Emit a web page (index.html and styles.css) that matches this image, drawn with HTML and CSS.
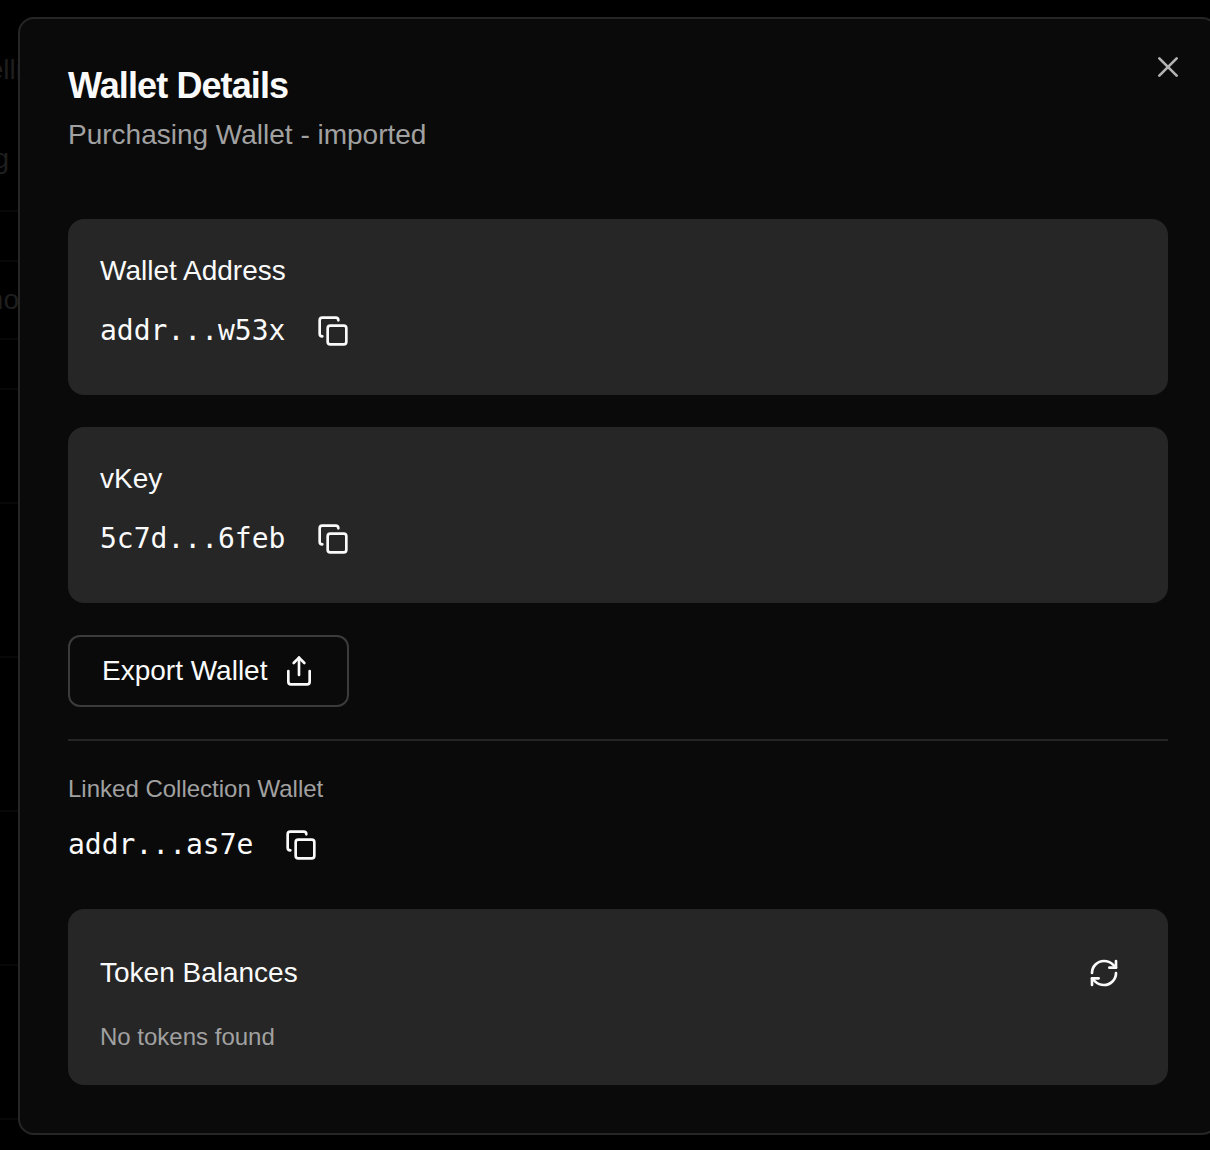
FILE: index.html
```html
<!DOCTYPE html>
<html lang="en">
<head>
<meta charset="utf-8">
<title>Wallet Details</title>
<link rel="stylesheet" href="styles.css">
</head>
<body>
<svg class="sprite" aria-hidden="true">
  <symbol id="copy" viewBox="0 0 24 24"><rect width="14" height="14" x="8" y="8" rx="2" ry="2"/><path d="M4 16c-1.100 0-2-.9-2-2V4c0-1.100.9-2 2-2h10c1.100 0 2 .9 2 2"/></symbol>
  <symbol id="share" viewBox="0 0 24 24"><path d="M4 12v8a2 2 0 0 0 2 2h12a2 2 0 0 0 2-2v-8"/><path d="m16 6-4-4-4 4"/><path d="M12 2v13"/></symbol>
  <symbol id="refresh" viewBox="0 0 24 24"><path d="M3 12a9 9 0 0 1 9-9 9.750 9.750 0 0 1 6.740 2.740L21 8"/><path d="M21 3v5h-5"/><path d="M21 12a9 9 0 0 1-9 9 9.750 9.750 0 0 1-6.740-2.740L3 16"/><path d="M8 16H3v5"/></symbol>
  <symbol id="close" viewBox="0 0 24 24"><path d="M18.500 5.500 5.500 18.500"/><path d="m5.500 5.500 13 13"/></symbol>
</svg>
<div class="screen">
  <div class="backdrop">
    <div class="strip strip-head"><span class="sell">elli</span><span class="ing">g</span></div>
    <div class="strip strip-sm"></div>
    <div class="strip strip-md"><span class="who">ho</span></div>
    <div class="strip strip-sm"></div>
    <div class="strip strip-lg"></div>
    <div class="strip strip-xl"></div>
    <div class="strip strip-xl"></div>
    <div class="strip strip-xl"></div>
    <div class="strip strip-xl"></div>
  </div>
  <main class="dialog">
    <header class="header">
      <div class="heading">
        <h1 class="title">Wallet Details</h1>
        <p class="subtitle">Purchasing Wallet - imported</p>
      </div>
      <button class="close" aria-label="Close"><svg class="icon"><use href="#close"/></svg></button>
    </header>
    <section class="card">
      <h2 class="label">Wallet Address</h2>
      <div class="value"><span class="mono">addr...w53x</span><button class="icon-button" aria-label="Copy"><svg class="icon"><use href="#copy"/></svg></button></div>
    </section>
    <section class="card">
      <h2 class="label">vKey</h2>
      <div class="value"><span class="mono">5c7d...6feb</span><button class="icon-button" aria-label="Copy"><svg class="icon"><use href="#copy"/></svg></button></div>
    </section>
    <button class="export"><span>Export Wallet</span><svg class="icon"><use href="#share"/></svg></button>
    <section class="linked">
      <p class="note">Linked Collection Wallet</p>
      <div class="value"><span class="mono">addr...as7e</span><button class="icon-button" aria-label="Copy"><svg class="icon"><use href="#copy"/></svg></button></div>
    </section>
    <section class="card balances">
      <div class="balances-head"><h2 class="label">Token Balances</h2><button class="icon-button" aria-label="Refresh"><svg class="icon"><use href="#refresh"/></svg></button></div>
      <p class="note">No tokens found</p>
    </section>
  </main>
</div>
</body>
</html>
```
FILE: styles.css
```css
* { box-sizing: border-box; margin: 0; padding: 0; }
body {
  background: #000;
  color: #fafafa;
  font: 28px/40px "Liberation Sans", Arial, sans-serif;
  overflow: hidden;
}
button { background: none; border: 0; color: inherit; font: inherit; }
.sprite { display: none; }
.screen { display: flex; height: 1150px; overflow: hidden; }

.backdrop { width: 18px; flex: none; overflow: hidden; color: #1f1f1f; }
.strip {
  display: flex;
  flex-direction: column;
  align-items: flex-end;
  border-bottom: 2px solid #080808;
}
.strip-head { height: 212px; padding-top: 50px; gap: 49px; }
.strip-sm { height: 50px; }
.strip-md { height: 78px; justify-content: center; }
.strip-lg { height: 114px; }
.strip-xl { height: 154px; }
.sell { margin-right: -4px; }
.ing { padding-right: 9px; }
.who { margin-right: -1px; }

.dialog {
  display: flex;
  flex-direction: column;
  align-items: stretch;
  gap: 32px;
  flex: none;
  width: 1200px;
  height: 1118px;
  margin-top: 17px;
  padding: 48px;
  background: #0a0a0a;
  border: 2px solid #262626;
  border-radius: 16px;
}
.header { display: flex; justify-content: space-between; height: 120px; }
.heading { display: flex; flex-direction: column; gap: 11px; }
.title { font-size: 36px; line-height: 37px; letter-spacing: -0.9px; }
.subtitle, .note { color: #a1a1a1; }
.note { font-size: 24px; line-height: 32px; }
.close { display: flex; height: 32px; margin: -16px -16px 0 0; opacity: .7; }
.icon {
  display: block;
  width: 32px;
  height: 32px;
  fill: none;
  stroke: currentColor;
  stroke-width: 2;
  stroke-linecap: round;
  stroke-linejoin: round;
}

.card {
  display: flex;
  flex-direction: column;
  gap: 8px;
  height: 176px;
  padding: 32px;
  background: #262626;
  border-radius: 16px;
}
.label { font-size: 28px; font-weight: 400; line-height: 40px; }
.value { display: flex; align-items: center; gap: 16px; }
.mono { font-family: "DejaVu Sans Mono", monospace; }
.icon-button { display: flex; align-items: center; justify-content: center; width: 64px; height: 64px; }
.export {
  display: flex;
  align-items: center;
  align-self: flex-start;
  gap: 16px;
  height: 72px;
  padding: 0 32px;
  border: 2px solid #3b3b3b;
  border-radius: 12px;
}
.linked {
  display: flex;
  flex-direction: column;
  gap: 8px;
  padding-top: 32px;
  border-top: 2px solid #262626;
}
.balances { gap: 16px; }
.balances-head { display: flex; align-items: center; justify-content: space-between; }
```
